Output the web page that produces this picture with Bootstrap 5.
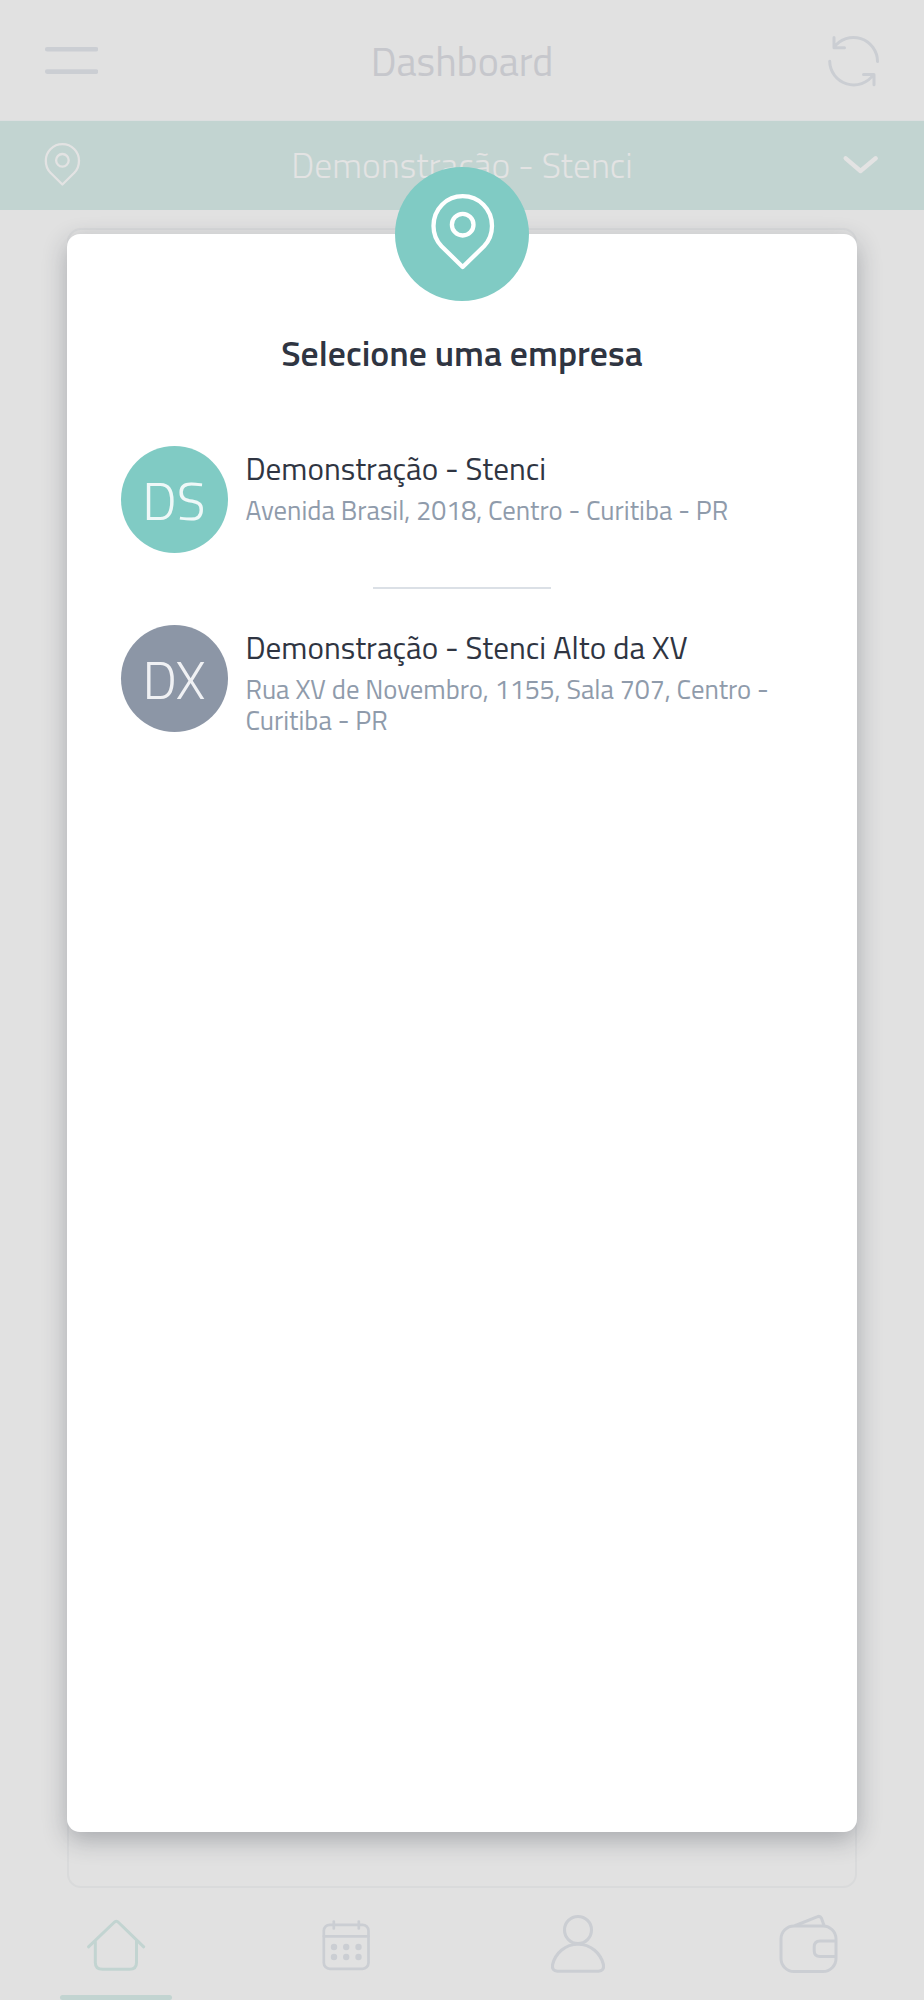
<!DOCTYPE html>
<html lang="pt-BR">
<head>
<meta charset="utf-8">
<meta name="viewport" content="width=device-width, initial-scale=1">
<title>Selecione uma empresa</title>
<link href="https://cdn.jsdelivr.net/npm/bootstrap@5.3.0/dist/css/bootstrap.min.css" rel="stylesheet">
<style>
  body { background: #e1e1e1; font-family: "Titillium Web", Roboto, "Open Sans", sans-serif; }
  svg { display: block; fill: none; stroke: currentColor; stroke-linecap: round; stroke-linejoin: round; }
  .screen { width: 924px; height: 2000px; color: #cbced3; }
  .topbar { height: 121px; padding: 0 44px; border-bottom: 1px solid #dcdfe0; }
  .topbar-title { font-size: 40px; line-height: 1; color: #c6c7cc; padding-top: 4px; }
  .unit-bar { height: 89px; padding: 0 44px; background: #c2d4d1; color: #e3e3e3; }
  .unit-name { font-size: 35.6px; line-height: 1; font-weight: 300; padding-top: 1px; }
  .side-slot { width: 54px; }
  .panel { margin: 18px 67px 0; height: 1660px; border: 2px solid #d9dadb; border-radius: 14px; }
  .sheet { top: 234px; left: 67px; width: 790px; height: 1598px; border-radius: 13px; background: #fff;
    box-shadow: 0 8px 24px rgba(47,53,66,.32); padding: 0 53.5px; }
  .sheet-pin { width: 134px; height: 134px; margin-top: -67px; background: #80cbc4; color: #fff; }
  .sheet-title { margin: 32px 0 73px; height: 40px; font-size: 35.7px; line-height: 40px; font-weight: 600; color: #2f3542; }
  .company { gap: 18px; height: 107px; }
  .avatar { width: 107px; height: 107px; font-size: 53.4px; line-height: 1; font-weight: 300; color: rgba(255,255,255,.87); padding-top: 3px; }
  .avatar-teal { background: #80cbc4; }
  .avatar-gray { background: #8c96a6; }
  .company-name { font-size: 31.2px; line-height: 37px; color: #2f3542; margin-top: 4px; white-space: nowrap; }
  .company-address { font-size: 26.75px; line-height: 31px; color: #8f9bab; margin-top: 8px; white-space: nowrap; }
  .divider { width: 178px; height: 2px; background: #dbe0e6; margin: 34px auto 36px; }
  .tabs { height: 112px; }
  .tab-line { bottom: 0; left: 60px; width: 112px; height: 5px; border-radius: 3px; background: #c2d4d1; }
  .tab-active { color: #c2d4d1; }
</style>
</head>
<body>
<div class="screen position-relative overflow-hidden">
  <header class="topbar d-flex align-items-center justify-content-between">
    <div class="side-slot">
      <svg width="54" height="30" viewBox="0 0 54 30" stroke-width="4.6"><path d="M3.2 4.2H52M3.2 26.6H52"/></svg>
    </div>
    <div class="topbar-title">Dashboard</div>
    <div class="side-slot d-flex justify-content-end">
      <svg width="54" height="54" viewBox="826 33 54 54" stroke-width="3"><path d="M877.5 61.5A24 24 0 0 0 834 47.5M834 37.5V47.7H844.5M829.7 61.3A24 24 0 0 0 873.5 74.500M863.5 74.5H874V84.8"/></svg>
    </div>
  </header>
  <div class="unit-bar d-flex align-items-center justify-content-between">
    <div class="side-slot">
      <svg width="38" height="47" viewBox="44 142 38 47" stroke-width="2.3"><path d="M62.400 184.500L50.500 172.800C47.500 169.800 45.800 165.500 45.800 160.800C45.800 151.500 53.200 144.200 62.400 144.200S79 151.500 79 160.800C79 165.500 77.300 169.800 74.300 172.800Z"/><circle cx="62.400" cy="160.300" r="6.300"/></svg>
    </div>
    <div class="unit-name">Demonstração - Stenci</div>
    <div class="side-slot d-flex justify-content-end">
      <svg width="38" height="21" viewBox="842 155 38 21" stroke-width="4.400"><path d="M845.700 158.300L860.500 171L875.700 158.300"/></svg>
    </div>
  </div>
  <main class="panel"></main>
  <nav class="tabs d-flex position-relative">
    <div class="col-3 d-flex justify-content-center tab-active">
      <svg width="60" height="100" viewBox="86 1888 60 100" stroke-width="3"><path d="M88.500 1946.800L114 1922.500Q116.300 1920 118.600 1922.500L143.700 1946.800M95.300 1941V1962.500Q95.300 1969.300 102.500 1969.300H129.500Q136.500 1969.300 136.500 1962.500V1941"/></svg>
    </div>
    <div class="col-3 d-flex justify-content-center">
      <svg width="60" height="100" viewBox="316.500 1888 60 100" stroke-width="2.700"><rect x="323.300" y="1924.800" width="44.700" height="44" rx="6"/><path d="M323.300 1936.300H368M333.300 1921.500V1928.500M358.300 1921.500V1928.500"/><g fill="currentColor" stroke="none"><circle cx="333.500" cy="1947" r="3.200"/><circle cx="345.700" cy="1947" r="3.200"/><circle cx="358" cy="1947" r="3.200"/><circle cx="333.500" cy="1957" r="3.200"/><circle cx="345.700" cy="1957" r="3.200"/><circle cx="358" cy="1957" r="3.200"/></g></svg>
    </div>
    <div class="col-3 d-flex justify-content-center">
      <svg width="60" height="100" viewBox="548 1888 60 100" stroke-width="3.100"><circle cx="578" cy="1930" r="13.500"/><path d="M557.500 1971.300Q551.500 1971 552.600 1964.500C555.500 1953 565.500 1944.200 578 1944.200S600.500 1953 603.400 1964.500Q604.500 1971 598.500 1971.300Z"/></svg>
    </div>
    <div class="col-3 d-flex justify-content-center">
      <svg width="60" height="100" viewBox="778.500 1888 60 100" stroke-width="3"><rect x="780.500" y="1926" width="55" height="45.500" rx="13"/><path d="M835 1941H819.500Q813.700 1941 813.700 1947V1950.800Q813.700 1956.600 819.500 1956.600H835M795 1925.500L816.500 1916.800Q819.500 1915.500 821 1918.200L823.500 1925.500"/></svg>
    </div>
    <div class="tab-line position-absolute"></div>
  </nav>

  <section class="sheet position-absolute">
    <div class="sheet-pin rounded-circle mx-auto d-flex align-items-center justify-content-center">
      <svg width="134" height="134" viewBox="395 167 134 134" stroke-width="4.300"><path d="M462.700 267L441.500 246.200C436.500 241 433.500 234.500 433.500 226C433.500 209 446.500 196.200 462.700 196.200S492 209 492 226C492 234.500 489 241 484 246.200Z"/><circle cx="462.700" cy="224.700" r="10.800"/></svg>
    </div>
    <h1 class="sheet-title text-center">Selecione uma empresa</h1>
    <div class="company d-flex">
      <div class="avatar avatar-teal rounded-circle flex-shrink-0 d-flex align-items-center justify-content-center">DS</div>
      <div>
        <div class="company-name">Demonstração - Stenci</div>
        <div class="company-address">Avenida Brasil, 2018, Centro - Curitiba - PR</div>
      </div>
    </div>
    <div class="divider"></div>
    <div class="company d-flex">
      <div class="avatar avatar-gray rounded-circle flex-shrink-0 d-flex align-items-center justify-content-center">DX</div>
      <div>
        <div class="company-name">Demonstração - Stenci Alto da XV</div>
        <div class="company-address">Rua XV de Novembro, 1155, Sala 707, Centro -<br>Curitiba - PR</div>
      </div>
    </div>
  </section>
</div>
<script src="https://cdn.jsdelivr.net/npm/bootstrap@5.3.0/dist/js/bootstrap.bundle.min.js"></script>
</body>
</html>
